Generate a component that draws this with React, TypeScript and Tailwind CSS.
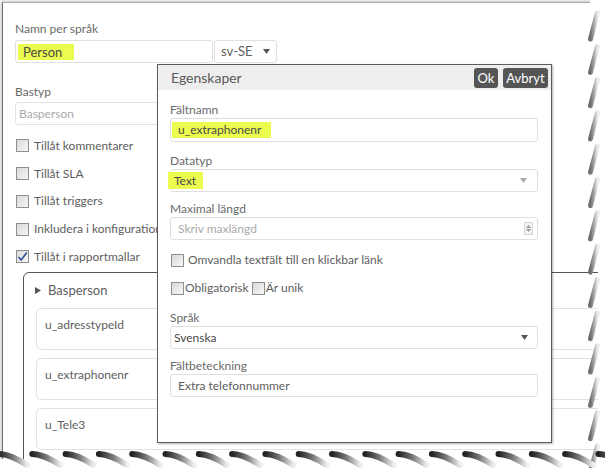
import React from "react";

function Box({ checked = false, className = "" }: { checked?: boolean; className?: string }) {
  return (
    <span
      className={`inline-flex h-[13px] w-[13px] shrink-0 items-center justify-center border border-[#8e8e8e] bg-linear-to-br from-[#d9d9d9] to-[#f7f7f7] ${className}`}
    >
      {checked && (
        <svg width="11" height="11" viewBox="0 0 11 11">
          <path d="M1.5 6 L4.2 9 L9.8 1.5" fill="none" stroke="#2a4d9e" strokeWidth="1.6" />
        </svg>
      )}
    </span>
  );
}

function Arrow({ color = "#555" }: { color?: string }) {
  return (
    <svg width="7" height="5" viewBox="0 0 7 5">
      <polygon points="0,0 7,0 3.5,5" fill={color} />
    </svg>
  );
}

function Hl({ children, className = "" }: { children: React.ReactNode; className?: string }) {
  return <span className={`inline-block bg-[#ebfc4e] leading-[16px] ${className}`}>{children}</span>;
}

export default function App() {
  const rightStrokes = Array.from({ length: 14 }, (_, k) => 13 + k * 33.3);
  const bottomStrokes = Array.from({ length: 19 }, (_, k) => -5 + k * 33.3);
  return (
    <div className="relative h-[468px] w-[605px] overflow-hidden bg-white font-['Lato','Open_Sans',sans-serif] text-[12px] text-[#5e5e5e]">
      {/* paper */}
      <div className="ml-[2px] mt-[2px] h-[480px] w-[620px] border-l border-t border-l-[#6e6e6e] border-t-[#a9a9a9] pl-[12px] pt-[18px] shadow-[-1px_-1px_3px_rgba(0,0,0,0.25)]">
        <div className="leading-[16px] text-[#6a6a6a]">Namn per språk</div>
        <div className="mt-[3px] flex h-[23px]">
          <div className="flex h-full w-[198px] items-center rounded-[3px] border border-[#e0e0e0] pl-[2px]">
            <Hl className="pl-[5px] pr-[12px] text-[13px] text-[#4a4a4a]">Person</Hl>
          </div>
          <div className="ml-[1px] flex h-full w-[63px] items-center justify-between rounded-[3px] border border-[#e0e0e0] pl-[6px] pr-[6px] text-[13px]">
            <span>sv-SE</span>
            <Arrow />
          </div>
        </div>

        <div className="mt-[21px] leading-[16px] text-[#6a6a6a]">Bastyp</div>
        <div className="mt-[2px] flex h-[23px] w-[400px] items-center rounded-[3px] border border-[#e3e3e3] pl-[3px] text-[#aaa]">
          Basperson
        </div>

        <div className="mt-[7px] flex flex-col">
          {[
            ["Tillåt kommentarer", false],
            ["Tillåt SLA", false],
            ["Tillåt triggers", false],
            ["Inkludera i konfiguration", false],
            ["Tillåt i rapportmallar", true],
          ].map(([t, c]) => (
            <div key={t as string} className="ml-[1px] flex h-[27.75px] items-center gap-[5px]">
              <Box checked={c as boolean} />
              <span>{t as string}</span>
            </div>
          ))}
        </div>

        <div className="ml-[8px] mt-[1px] h-[300px] w-[600px] rounded-tl-[6px] border border-[#555]">
          <div className="flex h-[35px] items-center pl-[11px]">
            <svg width="6" height="7" viewBox="0 0 6 7">
              <polygon points="0,0 6,3.5 0,7" fill="#555" />
            </svg>
            <span className="ml-[7px] text-[13px]">Basperson</span>
          </div>
          <div className="ml-[12px] flex flex-col gap-[8px]">
            {["u_adresstypeId", "u_extraphonenr", "u_Tele3"].map((t) => (
              <div key={t} className="h-[42px] w-[580px] rounded-[5px] border border-[#e2e2e2] pl-[8px] pt-[8px] leading-[16px]">
                {t}
              </div>
            ))}
          </div>
        </div>
      </div>

      {/* modal */}
      <div className="absolute left-[157px] top-[64px] h-[379px] w-[395px] border border-[#5c5c5c] bg-white shadow-[1px_1px_2px_rgba(0,0,0,0.3)]">
        <div className="flex h-[25px] items-center justify-between bg-[#eeeeee] pl-[13px] pr-[3px]">
          <span className="text-[14px] text-[#5a5a5a]">Egenskaper</span>
          <div className="flex gap-[5px]">
            <span className="h-[20px] w-[24px] rounded-[3px] bg-[#555] text-center text-[13px] leading-[20px] text-white">Ok</span>
            <span className="h-[20px] w-[45px] rounded-[3px] bg-[#555] text-center text-[13px] leading-[20px] text-white">Avbryt</span>
          </div>
        </div>
        <div className="pl-[12px]">
          <div className="mt-[12px] leading-[16px] text-[#6a6a6a]">Fältnamn</div>
          <div className="flex h-[24px] w-[368px] items-center rounded-[3px] border border-[#e0e0e0] pl-[1px]">
            <Hl className="pl-[6px] pr-[10px] text-[#4a4a4a]">u_extraphonenr</Hl>
          </div>

          <div className="mt-[11px] leading-[16px] text-[#6a6a6a]">Datatyp</div>
          <div className="flex h-[23px] w-[368px] items-center justify-between rounded-[3px] border border-[#e0e0e0] pr-[10px]">
            <Hl className="-ml-[3px] h-[17px] pl-[6px] pr-[7px] leading-[17px] text-[#4a4a4a]">Text</Hl>
            <Arrow color="#aaa" />
          </div>

          <div className="mt-[9px] leading-[16px] text-[#6a6a6a]">Maximal längd</div>
          <div className="flex h-[23px] w-[368px] items-center justify-between rounded-[3px] border border-[#e0e0e0] pl-[7px] pr-[4px] text-[#aaa]">
            <span>Skriv maxlängd</span>
            <span className="flex h-[13px] w-[9px] flex-col items-center justify-center gap-[1px] border border-[#d5d5d5] bg-[#f3f3f3]">
              <svg width="5" height="3" viewBox="0 0 5 3"><polygon points="2.5,0 5,3 0,3" fill="#999" /></svg>
              <svg width="5" height="3" viewBox="0 0 5 3"><polygon points="0,0 5,0 2.5,3" fill="#999" /></svg>
            </span>
          </div>

          <div className="mt-[12px] flex h-[16px] items-center gap-[4px]">
            <Box className="ml-[1px]" />
            <span>Omvandla textfält till en klickbar länk</span>
          </div>

          <div className="mt-[12px] flex h-[16px] items-center">
            <Box className="ml-[1px]" />
            <span className="ml-[1px]">Obligatorisk</span>
            <Box className="ml-[3px]" />
            <span className="ml-[1px]">Är unik</span>
          </div>

          <div className="mt-[14px] leading-[16px] text-[#6a6a6a]">Språk</div>
          <div className="flex h-[23px] w-[368px] items-center justify-between rounded-[3px] border border-[#e0e0e0] pl-[3px] pr-[9px] text-[#4a4a4a]">
            <span>Svenska</span>
            <Arrow color="#555" />
          </div>

          <div className="mt-[9px] leading-[16px] text-[#6a6a6a]">Fältbeteckning</div>
          <div className="flex h-[23px] w-[368px] items-center rounded-[3px] border border-[#e0e0e0] pl-[7px]">
            Extra telefonnummer
          </div>
        </div>
      </div>

      {/* torn edges */}
      <svg className="pointer-events-none absolute left-0 top-0" width="605" height="468" viewBox="0 0 605 468">
        <defs>
          <linearGradient id="gr" x1="0" y1="0" x2="1" y2="0">
            <stop offset="0" stopColor="#6e6e6e" />
            <stop offset="0.5" stopColor="#a8a8a8" />
            <stop offset="1" stopColor="#ececec" />
          </linearGradient>
          <linearGradient id="gb" x1="0" y1="0" x2="1" y2="0">
            <stop offset="0" stopColor="#222" />
            <stop offset="0.5" stopColor="#777" />
            <stop offset="1" stopColor="#eee" />
          </linearGradient>
        </defs>
        <rect x="598" y="0" width="7" height="468" fill="#ffffff" />
        <rect x="590" y="0" width="15" height="10" fill="#ffffff" />
        <rect x="0" y="459" width="605" height="9" fill="#ffffff" />
        {rightStrokes.map((y, i) => (
          <path key={`r${i}`} d={`M590.5 ${y + 26} L597.5 ${y}`} stroke="url(#gr)" strokeWidth="5" strokeLinecap="round" fill="none" />
        ))}
        {bottomStrokes.map((x, i) => (
          <path key={`b${i}`} d={`M${x + 4} ${454} Q${x + 15} ${454} ${x + 32} ${465}`} stroke="url(#gb)" strokeWidth="6" strokeLinecap="round" fill="none" />
        ))}
      </svg>
    </div>
  );
}
